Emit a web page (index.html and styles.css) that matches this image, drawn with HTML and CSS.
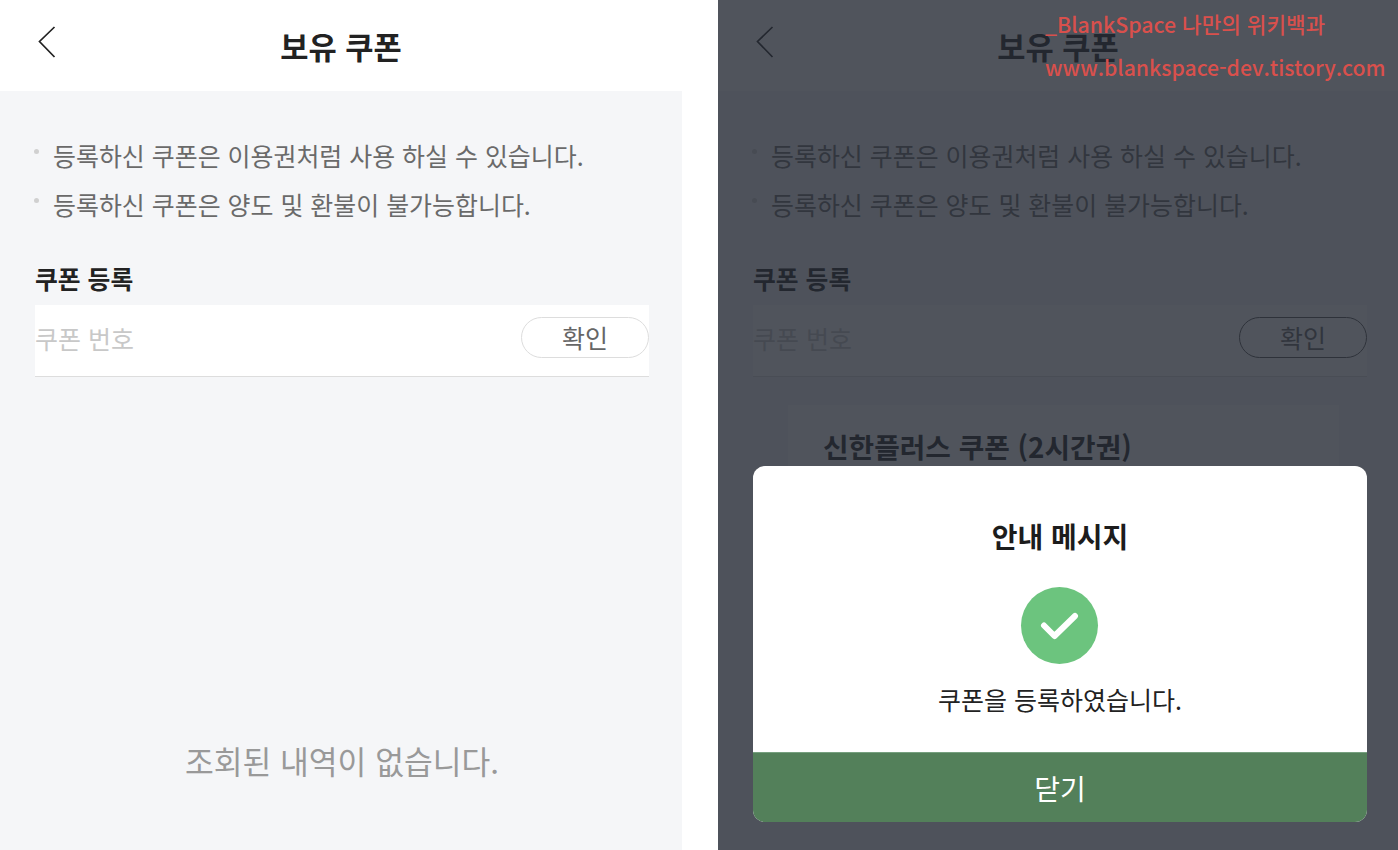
FILE: index.html
```html
<!DOCTYPE html>
<html lang="ko">
<head>
  <meta charset="UTF-8" />
  <meta name="viewport" content="width=device-width, initial-scale=1" />
  <title>보유 쿠폰</title>
  <link rel="stylesheet" href="styles.css">
</head>
<body>
  <div class="page">
    <section class="screen screen-left">
      <header class="topbar">
        <svg class="back" width="20" height="34" viewBox="0 0 20 34"><path d="M17.5 2 L2.5 16.5 L17.5 32" fill="none" stroke="#222" stroke-width="1.7"/></svg>
        <h1>보유 쿠폰</h1>
      </header>
      <main class="content">
        <ul class="notes">
          <li>등록하신 쿠폰은 이용권처럼 사용 하실 수 있습니다.</li>
          <li>등록하신 쿠폰은 양도 및 환불이 불가능합니다.</li>
        </ul>
        <h2 class="reg-title">쿠폰 등록</h2>
        <div class="reg-box">
          <span class="placeholder">쿠폰 번호</span>
          <button class="confirm">확인</button>
        </div>
        <p class="empty">조회된 내역이 없습니다.</p>
      </main>
    </section>

    <section class="screen screen-right">
      <header class="topbar">
        <svg class="back" width="20" height="34" viewBox="0 0 20 34"><path d="M17.5 2 L2.5 16.5 L17.5 32" fill="none" stroke="#222" stroke-width="1.7"/></svg>
        <h1>보유 쿠폰</h1>
      </header>
      <main class="content">
        <ul class="notes">
          <li>등록하신 쿠폰은 이용권처럼 사용 하실 수 있습니다.</li>
          <li>등록하신 쿠폰은 양도 및 환불이 불가능합니다.</li>
        </ul>
        <h2 class="reg-title">쿠폰 등록</h2>
        <div class="reg-box">
          <span class="placeholder">쿠폰 번호</span>
          <button class="confirm">확인</button>
        </div>
        <div class="coupon-card">
          <div class="coupon-name">신한플러스 쿠폰 (2시간권)</div>
        </div>
      </main>
      <div class="dim"></div>
      <div class="modal">
        <div class="modal-body">
          <div class="modal-title">안내 메시지</div>
          <div class="check">
            <svg width="40" height="30" viewBox="0 0 40 30"><path d="M4 14.5 L14.5 25 L35 5" fill="none" stroke="#fff" stroke-width="6" stroke-linecap="round" stroke-linejoin="round"/></svg>
          </div>
          <p class="modal-text">쿠폰을 등록하였습니다.</p>
        </div>
        <button class="modal-close">닫기</button>
      </div>
      <div class="watermark">
        <div class="wm-one">_BlankSpace 나만의 위키백과</div>
        <div class="wm-two">www.blankspace-dev.tistory.com</div>
      </div>
    </section>
  </div>
</body>
</html>
```

FILE: styles.css
```css
* {
  box-sizing: border-box;
}
body {
  margin: 0;
  background: #fff;
  font-family: "Noto Sans CJK KR", "Noto Sans", sans-serif;
  color: #222;
}
.page {
  display: flex;
  gap: 36px;
  height: 850px;
  overflow: hidden;
}
.screen {
  position: relative;
  height: 850px;
  overflow: hidden;
  display: flex;
  flex-direction: column;
  background: #f5f6f8;
}
.screen-left {
  width: 682px;
}
.screen-right {
  width: 680px;
}
.topbar {
  position: relative;
  height: 91px;
  flex-shrink: 0;
  background: #fff;
  display: flex;
  align-items: center;
  justify-content: center;
}
.back {
  position: absolute;
  left: 37px;
  top: 25px;
}
.topbar h1 {
  margin: 0;
  font-size: 30.7px;
  font-weight: 700;
  line-height: 91px;
}
.content {
  flex-grow: 1;
  display: flex;
  flex-direction: column;
  padding: 46px 33px 0 35px;
}
.notes {
  list-style: none;
  margin: 0;
  padding: 0;
  display: flex;
  flex-direction: column;
  gap: 13px;
}
.notes li {
  position: relative;
  padding-left: 18px;
  font-size: 24.95px;
  line-height: 36px;
  color: #6a6a6a;
}
.notes li::before {
  content: "";
  position: absolute;
  left: -1px;
  top: 12px;
  width: 5px;
  height: 5px;
  border-radius: 50%;
  background: #d0d0d0;
}
.reg-title {
  margin: 38px 0 0 0;
  font-size: 24.8px;
  font-weight: 700;
  line-height: 37px;
}
.reg-box {
  margin-top: 8px;
  height: 72px;
  background: #fff;
  border-bottom: 1px solid #ddd;
  display: flex;
  align-items: flex-start;
  justify-content: space-between;
  width: 614px;
}
.placeholder {
  margin: 15px 0 0 0;
  font-size: 25px;
  line-height: 37px;
  color: #c8c8c8;
}
.confirm {
  margin-top: 12px;
  width: 128px;
  height: 41px;
  padding: 0;
  border: 1px solid #ddd;
  border-radius: 21px;
  background: #fff;
  font-family: inherit;
  font-size: 25px;
  line-height: 37px;
  color: #666;
}
.screen-right .confirm {
  border-color: #555;
}
.empty {
  margin: 361px 0 0 0;
  text-align: center;
  font-size: 31.3px;
  line-height: 46px;
  color: #999;
}
.coupon-card {
  margin: 28px 26px 0 35px;
  height: 200px;
  padding: 21px 35px;
  background: #fff;
}
.coupon-name {
  font-size: 27.8px;
  font-weight: 700;
  line-height: 41px;
}
.dim {
  position: absolute;
  inset: 0;
  background: rgba(36, 41, 51, 0.8);
}
.modal {
  position: absolute;
  left: 35px;
  top: 466px;
  width: 614px;
  height: 356px;
  border-radius: 12px;
  overflow: hidden;
  background: #fff;
  display: flex;
  flex-direction: column;
}
.modal-body {
  flex-grow: 1;
  display: flex;
  flex-direction: column;
  align-items: center;
  padding-top: 49px;
}
.modal-title {
  font-size: 28px;
  font-weight: 700;
  line-height: 42px;
  color: #1c1c1c;
}
.check {
  margin: 30px 1px 0 0;
  width: 77px;
  height: 77px;
  border-radius: 50%;
  background: #6cc47e;
  display: flex;
  align-items: center;
  justify-content: center;
}
.modal-text {
  margin: 17px 0 0 0;
  font-size: 25px;
  line-height: 37px;
  color: #222;
}
.modal-close {
  height: 70px;
  flex-shrink: 0;
  border: none;
  border-top: 1px solid #76a07f;
  background: #53805a;
  color: #fff;
  font-family: inherit;
  font-size: 28px;
}
.watermark {
  position: absolute;
  left: 327px;
  top: 7px;
  color: #d9504c;
}
.wm-one {
  font-size: 21.3px;
  font-weight: 500;
  line-height: 33px;
}
.wm-two {
  margin-top: 10px;
  font-size: 21.2px;
  font-weight: 500;
  line-height: 33px;
}
```
